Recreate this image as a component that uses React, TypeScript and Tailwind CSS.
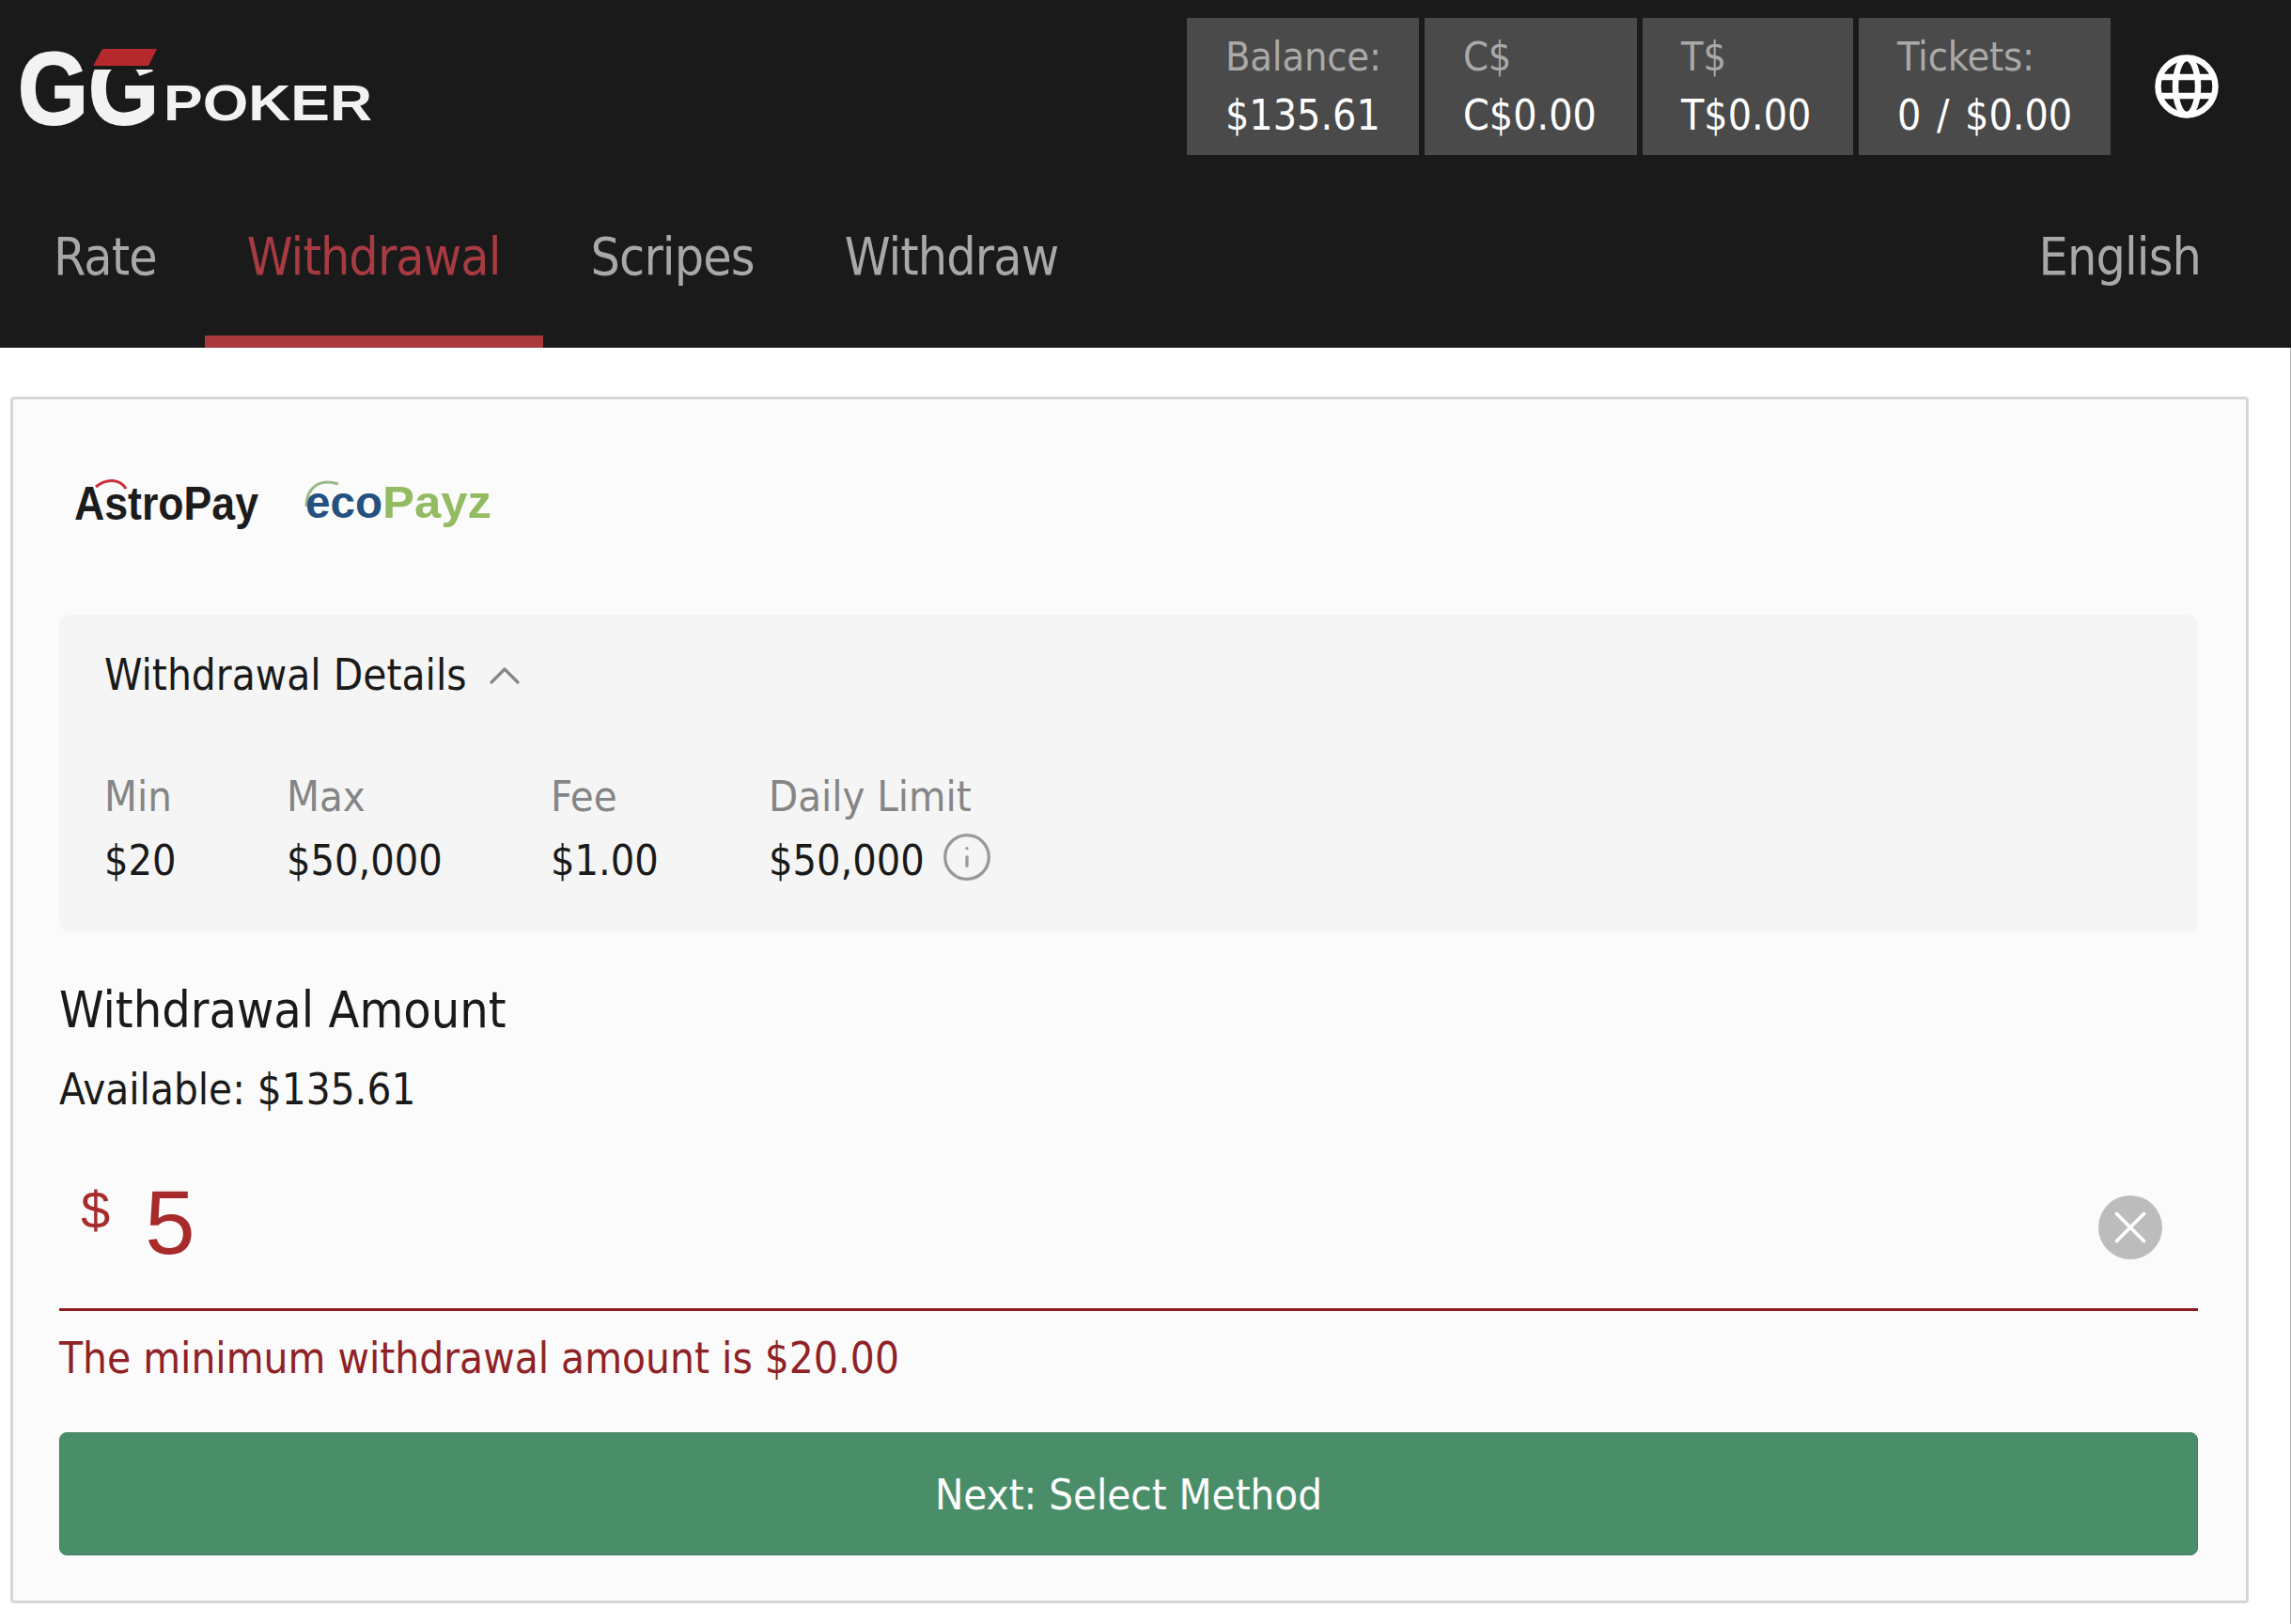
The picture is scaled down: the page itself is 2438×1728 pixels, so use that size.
import React from 'react';
import { ChevronUp, Info, X } from 'lucide-react';

const balances = [
  { label: 'Balance:', value: '$135.61', width: 'w-[247px]' },
  { label: 'C$', value: 'C$0.00', width: 'w-[226px]' },
  { label: 'T$', value: 'T$0.00', width: 'w-[224px]' },
  { label: 'Tickets:', value: '0 / $0.00', width: 'w-[268px]' },
];

const tabs = ['Rate', 'Withdrawal', 'Scripes', 'Withdraw'];

const limits = [
  { label: 'Min', value: '$20', width: 'w-[194px]' },
  { label: 'Max', value: '$50,000', width: 'w-[281px]' },
  { label: 'Fee', value: '$1.00', width: 'w-[232px]' },
  { label: 'Daily Limit', value: '$50,000', width: '' },
];

const Logo = () => (
  <svg width="400" height="130" viewBox="0 0 400 130" className="block">
    <text x="19" y="102" textLength="150" lengthAdjust="spacingAndGlyphs" fill="#f2f2f2" stroke="#f2f2f2" strokeWidth="2" fontFamily="Liberation Sans" fontWeight="700" fontSize="110">
      GG
    </text>
    <rect x="94" y="8" width="84" height="36" fill="#1a1a1a" />
    <polygon points="109,22 167,22 158,40 99,40" fill="#b5282c" />
    <text x="174" y="98" textLength="222" lengthAdjust="spacingAndGlyphs" fill="#f2f2f2" fontFamily="Liberation Sans" fontWeight="700" fontSize="54">
      POKER
    </text>
  </svg>
);

const GlobeIcon = () => (
  <svg width="68" height="68" viewBox="0 0 68 68" fill="none" stroke="#ffffff" strokeWidth="6.5">
    <circle cx="34" cy="34" r="30.5" />
    <ellipse cx="34" cy="34" rx="12" ry="30" />
    <path d="M6 24h56M6 44h56" />
  </svg>
);

const PaymentLogos = () => (
  <div className="flex items-start gap-[18px] pl-[15px] pt-[78px] h-[229px]">
    <svg width="226" height="70" viewBox="0 0 226 70" className="block">
      <path d="M24 15 C36 5 50 7 56 17" fill="none" stroke="#c8303a" strokeWidth="3" />
      <text x="1" y="50" textLength="196" lengthAdjust="spacingAndGlyphs" fill="#1c1c1c" fontFamily="Liberation Sans" fontWeight="700" fontSize="50">
        AstroPay
      </text>
    </svg>
    <svg width="226" height="70" viewBox="0 0 226 70" className="block">
      <path d="M4 36 C4 14 20 6 38 12" fill="none" stroke="#9bb98a" strokeWidth="3" />
      <text x="3" y="48" textLength="82" lengthAdjust="spacingAndGlyphs" fill="#24517f" fontFamily="Liberation Sans" fontWeight="700" fontSize="48">
        eco
      </text>
      <text x="85" y="48" textLength="116" lengthAdjust="spacingAndGlyphs" fill="#93bb62" fontFamily="Liberation Sans" fontWeight="700" fontSize="48">
        Payz
      </text>
    </svg>
  </div>
);

export default function App() {
  return (
    <div className="w-[2438px] h-[1728px] bg-white overflow-hidden font-['DejaVu_Sans_Condensed','DejaVu_Sans',sans-serif]">
      {/* Header */}
      <header className="h-[370px] bg-[#1a1a1a] relative">
        <div className="h-[165px] flex">
          <div className="pt-[30px]">
            <Logo />
          </div>
          <div className="ml-auto flex gap-[6px] pt-[19px] mr-[192px]">
            {balances.map((item) => (
              <div key={item.label} className={`${item.width} h-[146px] bg-[#4a4a4a] pl-[41px] pt-[15px]`}>
                <div className="text-[43px] tracking-[-0.2px] leading-[52px] text-[#a9a9a9]">{item.label}</div>
                <div className="mt-[11px] text-[44.3px] leading-[52px] text-white [word-spacing:4px]">{item.value}</div>
              </div>
            ))}
          </div>
          <div className="absolute left-[2293px] top-[58px]">
            <GlobeIcon />
          </div>
        </div>
        <nav className="h-[205px] flex gap-[6px] pl-[12px]">
          {tabs.map((tab) => (
            <div
              key={tab}
              className={`h-full px-[45px] pt-[78px] text-[55px] tracking-[-0.9px] leading-[60px] border-b-[13px] ${
                tab === 'Withdrawal' ? 'text-[#a83a42] border-[#a83a3e]' : 'text-[#a8a8a8] border-transparent'
              }`}
            >
              {tab}
            </div>
          ))}
          <div className="ml-auto mr-[96px] pt-[78px] text-[55px] tracking-[-0.9px] leading-[60px] text-[#a8a8a8]">English</div>
        </nav>
      </header>

      {/* Withdrawal card */}
      <main className="h-[1358px] pt-[52px] pl-[11px] border-r border-[#b0b0b0]">
        <div className="w-[2382px] h-[1284px] bg-[#fcfbfb] border-[3px] border-[#d6d6d6] rounded-[4px] pl-[49px] pr-[51px]">
          <PaymentLogos />

          <section className="h-[338px] bg-[#f5f5f5] rounded-[12px] pl-[48px] pt-[38px]">
            <div className="flex items-center text-[45.5px] leading-[54px] text-[#1a1a1a]">
              <span>Withdrawal Details</span>
              <ChevronUp className="ml-[12px] -my-[4px] w-[56px] h-[56px] text-[#888888]" strokeWidth={1.4} />
            </div>
            <div className="flex mt-[74px]">
              {limits.map((limit) => (
                <div key={limit.label} className={limit.width}>
                  <div className="text-[45px] leading-[56px] text-[#858585]">{limit.label}</div>
                  <div className="mt-[12px] flex items-start text-[44.6px] leading-[56px] text-[#1a1a1a]">
                    <span>{limit.value}</span>
                    {limit.label === 'Daily Limit' && (
                      <Info className="ml-[17px] -mt-[4px] w-[56px] h-[56px] text-[#999999]" strokeWidth={1.4} />
                    )}
                  </div>
                </div>
              ))}
            </div>
          </section>

          <h2 className="mt-[51px] text-[53.5px] leading-[64px] font-normal text-[#1a1a1a]">Withdrawal Amount</h2>
          <p className="mt-[25px] text-[45.3px] leading-[56px] text-[#1a1a1a]">Available: $135.61</p>

          <div className="h-[207px] flex items-start pt-[66px] pl-[23px] pr-[38px] border-b-[3px] border-[#8a1a20] font-['Liberation_Sans',sans-serif] text-[#a82a2a]">
            <span className="mt-[6px] text-[56px] leading-[56px]">$</span>
            <span className="ml-[37px] -mt-[1px] text-[96px] leading-[96px]">5</span>
            <button className="ml-auto mt-[18px] w-[68px] h-[68px] rounded-full bg-[#bcbcbc] flex items-center justify-center">
              <X className="w-[58px] h-[58px] text-white" strokeWidth={1.6} />
            </button>
          </div>

          <p className="mt-[23px] text-[45.5px] leading-[56px] text-[#8f2226]">The minimum withdrawal amount is $20.00</p>

          <button className="mt-[50px] w-full h-[131px] bg-[#4a8e69] border border-[#3f7f5d] rounded-[8px] pt-[3px] text-[45.2px] text-white">
            Next: Select Method
          </button>
        </div>
      </main>
    </div>
  );
}
